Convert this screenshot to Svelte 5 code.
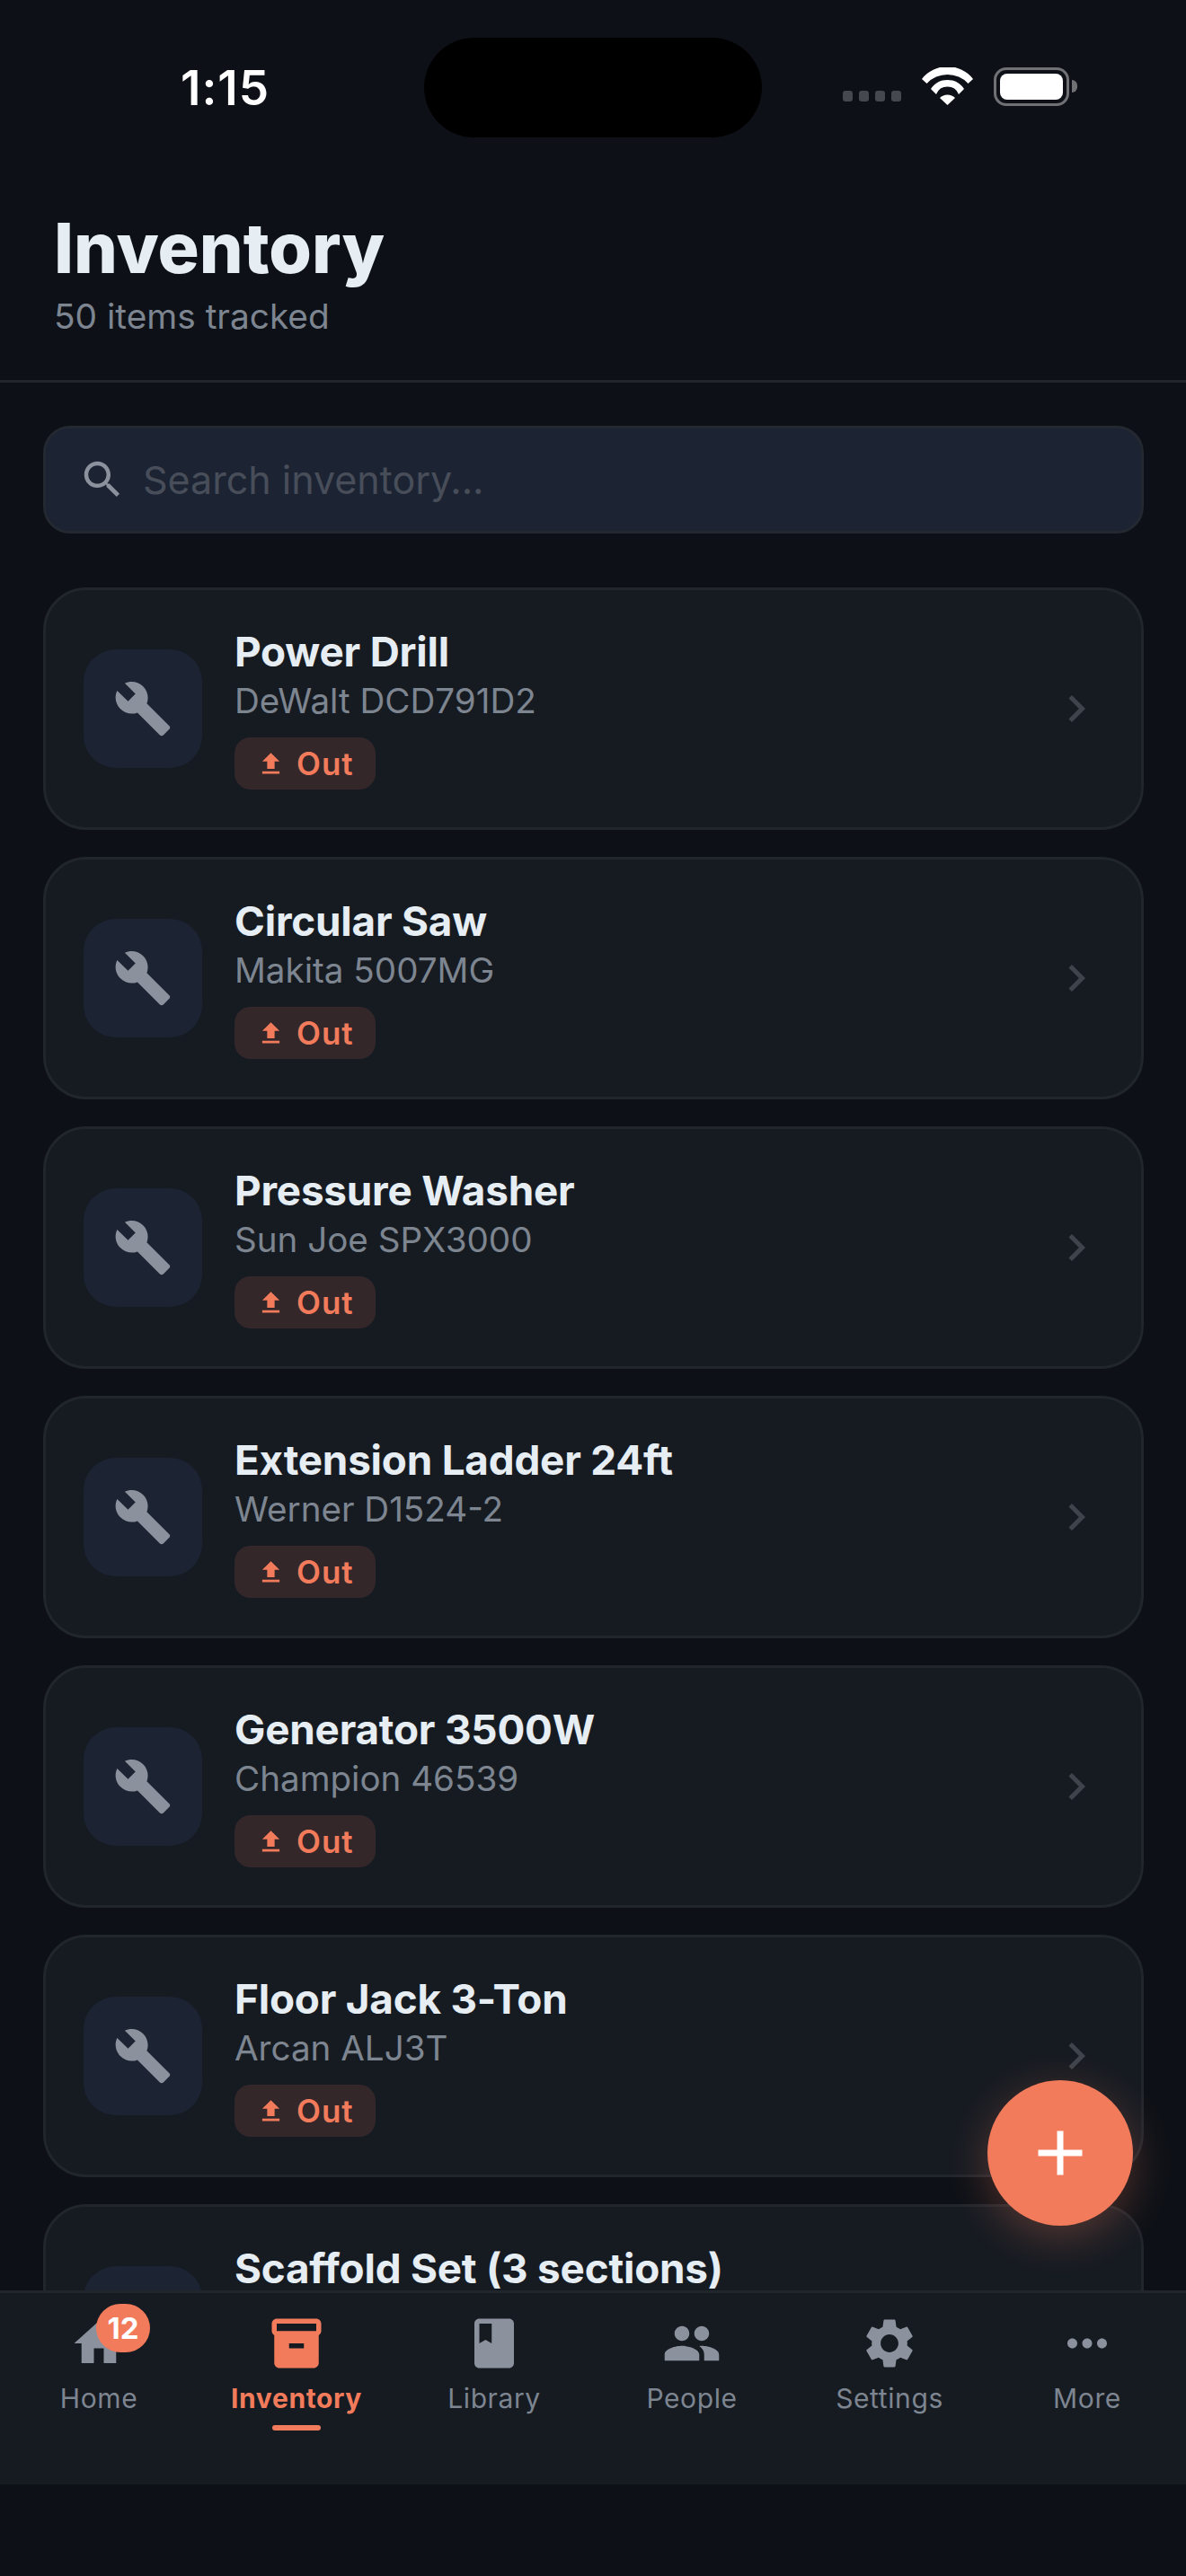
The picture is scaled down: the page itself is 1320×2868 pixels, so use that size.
<script>
  const items = [
    { name: 'Power Drill', model: 'DeWalt DCD791D2', out: true },
    { name: 'Circular Saw', model: 'Makita 5007MG', out: true },
    { name: 'Pressure Washer', model: 'Sun Joe SPX3000', out: true },
    { name: 'Extension Ladder 24ft', model: 'Werner D1524-2', out: true },
    { name: 'Generator 3500W', model: 'Champion 46539', out: true },
    { name: 'Floor Jack 3-Ton', model: 'Arcan ALJ3T', out: true },
    // last row sits behind the tab bar, only its title shows
    { name: 'Scaffold Set (3 sections)' }
  ];

  const tabs = [
    { label: 'Home', badge: '12', d: 'M10 20v-6h4v6h5v-8h3L12 3 2 12h3v8z' },
    { label: 'Inventory', active: true, d: 'M20 2H4c-1 0-2 .9-2 2v3.01c0 .72.43 1.34 1 1.69V20c0 1.1 1.1 2 2 2h14c.9 0 2-.9 2-2V8.7c.57-.35 1-.97 1-1.69V4c0-1.1-1-2-2-2zm-5 12H9v-2h6v2zm5-7H4V4l16-.02V7z' },
    { label: 'Library', d: 'M18 2H6c-1.1 0-2 .9-2 2v16c0 1.1.9 2 2 2h12c1.1 0 2-.9 2-2V4c0-1.1-.9-2-2-2zM6 4h5v8l-2.5-1.5L6 12V4z' },
    { label: 'People', d: 'M16 11c1.66 0 2.99-1.34 2.99-3S17.66 5 16 5c-1.66 0-3 1.34-3 3s1.34 3 3 3zm-8 0c1.66 0 2.99-1.34 2.99-3S9.66 5 8 5C6.34 5 5 6.34 5 8s1.34 3 3 3zm0 2c-2.33 0-7 1.17-7 3.5V19h14v-2.5c0-2.33-4.67-3.5-7-3.5zm8 0c-.29 0-.62.02-.97.05 1.16.84 1.97 1.97 1.97 3.45V19h6v-2.5c0-2.33-4.67-3.5-7-3.5z' },
    { label: 'Settings', d: 'M19.14 12.94c.04-.3.06-.61.06-.94 0-.32-.02-.64-.07-.94l2.03-1.58c.18-.14.23-.41.12-.61l-1.92-3.32c-.12-.22-.37-.29-.59-.22l-2.39.96c-.5-.38-1.03-.7-1.62-.94l-.36-2.54c-.04-.24-.24-.41-.48-.41h-3.84c-.24 0-.43.17-.47.41l-.36 2.54c-.59.24-1.13.57-1.62.94l-2.39-.96c-.22-.08-.47 0-.59.22L2.74 8.87c-.12.21-.08.47.12.61l2.03 1.58c-.05.3-.09.63-.09.94s.02.64.07.94l-2.03 1.58c-.18.14-.23.41-.12.61l1.92 3.32c.12.22.37.29.59.22l2.39-.96c.5.38 1.03.7 1.62.94l.36 2.54c.05.24.24.41.48.41h3.84c.24 0 .44-.17.47-.41l.36-2.54c.59-.24 1.13-.56 1.62-.94l2.39.96c.22.08.47 0 .59-.22l1.92-3.32c.12-.22.07-.47-.12-.61l-2.01-1.58zM12 15.6c-1.98 0-3.6-1.62-3.6-3.6s1.62-3.6 3.6-3.6 3.6 1.62 3.6 3.6-1.62 3.6-3.6 3.6z' },
    { label: 'More', d: 'M6 10c-1.1 0-2 .9-2 2s.9 2 2 2 2-.9 2-2-.9-2-2-2zm12 0c-1.1 0-2 .9-2 2s.9 2 2 2 2-.9 2-2-.9-2-2-2zm-6 0c-1.1 0-2 .9-2 2s.9 2 2 2 2-.9 2-2-.9-2-2-2z' }
  ];
</script>

<div class="screen">
  <div class="status">
    <span class="time">1:15</span>
    <div class="island"></div>
    <div class="status-right">
      <div class="dots"><i></i><i></i><i></i><i></i></div>
      <svg class="wifi" viewBox="0 0 57 42" width="57" height="42" fill="#fff" aria-hidden="true">
        <path d="M0 13A36 36 0 0 1 57 13L51.5 18A31.5 31.5 0 0 0 5.5 18Z"/>
        <path d="M10 24A22 22 0 0 1 47 24L41 30A13.5 13.5 0 0 0 16 30Z"/>
        <path d="M20 34A12 12 0 0 1 37 34L28.5 42Z"/>
      </svg>
      <div class="battery"><div class="cell"></div></div>
      <div class="nub"></div>
    </div>
  </div>

  <header class="head">
    <h1>Inventory</h1>
    <p>50 items tracked</p>
  </header>

  <main class="content">
    <div class="search">
      <svg viewBox="0 0 24 24" width="54" height="54" fill="#8b929d" aria-hidden="true">
        <path d="M15.5 14h-.79l-.28-.27C15.41 12.59 16 11.11 16 9.5 16 5.91 13.09 3 9.5 3S3 5.91 3 9.5 5.91 16 9.5 16c1.61 0 3.09-.59 4.23-1.57l.27.28v.79l5 4.99L20.49 19l-4.99-5zm-6 0C7.01 14 5 11.99 5 9.5S7.01 5 9.5 5 14 7.01 14 9.5 11.99 14 9.5 14z"/>
      </svg>
      <span class="placeholder">Search inventory...</span>
    </div>

    <div class="list">
      {#each items as item}
        <div class="card">
          <div class="thumb">
            <svg viewBox="0 0 24 24" width="66" height="66" fill="#8b929d" aria-hidden="true">
              <path d="M22.7 19l-9.1-9.1c.9-2.3.4-5-1.5-6.9-2-2-5-2.4-7.4-1.3L9 6 6 9 1.6 4.7C.4 7.1.9 10.1 2.9 12.1c1.9 1.9 4.6 2.4 6.9 1.5l9.1 9.1c.4.4 1 .4 1.4 0l2.3-2.3c.5-.4.5-1.1.1-1.4z"/>
            </svg>
          </div>
          <div class="info">
            <span class="name">{item.name}</span>
            {#if item.model}
              <span class="model">{item.model}</span>
            {/if}
            {#if item.out}
              <span class="pill">
                <svg viewBox="0 0 24 24" width="33" height="33" fill="currentColor" aria-hidden="true">
                  <path d="M9 16h6v-6h4l-7-7-7 7h4zm-4 2h14v2H5z"/>
                </svg>
                Out
              </span>
            {/if}
          </div>
          <svg class="chev" viewBox="0 0 24 24" width="60" height="60" fill="#3f444c" aria-hidden="true">
            <path d="M10 6L8.59 7.41 13.17 12l-4.58 4.59L10 18l6-6z"/>
          </svg>
        </div>
      {/each}
    </div>
  </main>

  <nav class="tabs">
    {#each tabs as tab}
      <div class="tab" class:active={tab.active}>
        <div class="tab-icon">
          <svg viewBox="0 0 24 24" width="66" height="66" fill="currentColor" aria-hidden="true">
            <path d={tab.d}/>
          </svg>
          {#if tab.badge}
            <span class="count">{tab.badge}</span>
          {/if}
        </div>
        <span class="tab-label">{tab.label}</span>
        {#if tab.active}
          <span class="underline"></span>
        {/if}
      </div>
    {/each}
  </nav>
  <div class="safe"></div>

  <button class="fab" type="button" aria-label="Add item">
    <svg viewBox="0 0 24 24" width="84" height="84" fill="#fff" aria-hidden="true">
      <path d="M19 13h-6v6h-2v-6H5v-2h6V5h2v6h6v2z"/>
    </svg>
  </button>
</div>

<style>
  :global(body) {
    background: #0d1117;
  }
  .screen {
    position: relative;
    display: flex;
    flex-direction: column;
    width: 1320px;
    height: 2868px;
    overflow: hidden;
    background: #0d1117;
    font-family: Inter, "Noto Sans", sans-serif;
  }
  .status {
    position: relative;
    display: flex;
    flex: none;
    align-items: center;
    justify-content: space-between;
    height: 196px;
    padding: 0 121px 0 201px;
    box-sizing: border-box;
  }
  .time {
    color: #fff;
    font-size: 53px;
    font-weight: 600;
    letter-spacing: 1px;
  }
  .island {
    position: absolute;
    left: 472px;
    top: 42px;
    width: 376px;
    height: 111px;
    border-radius: 56px;
    background: #000;
  }
  .status-right {
    display: flex;
    align-items: center;
    margin-top: -4px;
  }
  .dots {
    display: flex;
    gap: 7px;
    margin: 21px 23px 0 0;
  }
  .dots i {
    width: 11px;
    height: 12px;
    border-radius: 3px;
    background: #45484e;
  }
  .battery {
    box-sizing: border-box;
    width: 84px;
    height: 43px;
    margin-left: 23px;
    padding: 4px;
    border: 3px solid #6f7175;
    border-radius: 14px;
  }
  .cell {
    height: 100%;
    border-radius: 8px;
    background: #fff;
  }
  .nub {
    width: 6px;
    height: 14px;
    margin-left: 3px;
    border-radius: 0 7px 7px 0;
    background: #6f7175;
  }
  .head {
    flex: none;
    padding: 33px 60px 45px;
    border-bottom: 3px solid #21262d;
  }
  .head h1 {
    margin: 0;
    color: #e6edf3;
    font-size: 77px;
    font-weight: 800;
    line-height: 94px;
  }
  .head p {
    margin: 0;
    padding-top: 2px;
    color: #7d8590;
    font-size: 38.8px;
    line-height: 53px;
  }
  .content {
    flex: 1;
    min-height: 0;
    padding: 48px 47px 0 48px;
    overflow: hidden;
  }
  .search {
    display: flex;
    align-items: center;
    gap: 18px;
    box-sizing: border-box;
    height: 120px;
    margin-bottom: 60px;
    padding: 0 36px;
    border: 3px solid #232831;
    border-radius: 30px;
    background: #1c2333;
  }
  .placeholder {
    color: #484e59;
    font-size: 43px;
  }
  .list {
    display: flex;
    flex-direction: column;
    gap: 30px;
  }
  .card {
    display: flex;
    flex: none;
    align-items: center;
    gap: 36px;
    box-sizing: border-box;
    height: 270px;
    padding: 42px;
    border: 3px solid #21262d;
    border-radius: 48px;
    background: #161b22;
  }
  .thumb {
    display: flex;
    flex: none;
    align-items: center;
    justify-content: center;
    width: 132px;
    height: 132px;
    border-radius: 36px;
    background: #1c2333;
  }
  .info {
    display: flex;
    flex: 1;
    flex-direction: column;
    align-items: flex-start;
    align-self: flex-start;
    min-width: 0;
    padding-top: 1px;
  }
  .name {
    color: #e6edf3;
    font-size: 45.8px;
    font-weight: 650;
    line-height: 52px;
    letter-spacing: -0.2px;
  }
  .model {
    padding-top: 4px;
    color: #7d8590;
    font-size: 38.6px;
    line-height: 48px;
  }
  .pill {
    display: inline-flex;
    align-items: center;
    gap: 12px;
    height: 58px;
    margin-top: 17px;
    padding: 0 24px;
    border-radius: 18px;
    background: #33272a;
    color: #f27b5b;
    font-size: 35px;
    font-weight: 600;
    letter-spacing: 1px;
  }
  .chev {
    flex: none;
  }
  .tabs {
    display: flex;
    flex: none;
    box-sizing: border-box;
    height: 216px;
    padding-top: 23px;
    border-top: 3px solid #21262d;
    background: #161b22;
  }
  .tab {
    display: flex;
    flex: 1;
    flex-direction: column;
    align-items: center;
    color: #8b929d;
  }
  .tab.active {
    color: #f27b5b;
  }
  .tab-icon {
    position: relative;
    width: 66px;
    height: 66px;
  }
  .count {
    position: absolute;
    left: 30px;
    top: -11px;
    width: 60px;
    height: 54px;
    border-radius: 27px;
    background: #f27b5b;
    color: #fff;
    font-size: 33px;
    font-weight: 700;
    line-height: 54px;
    text-align: center;
  }
  .tab-label {
    margin-top: 8px;
    color: #7d8590;
    font-size: 30px;
    line-height: 40px;
    letter-spacing: 0.6px;
  }
  .active .tab-label {
    color: #f27b5b;
    font-weight: 700;
  }
  .underline {
    width: 54px;
    height: 6px;
    margin-top: 10px;
    border-radius: 3px;
    background: #f27b5b;
  }
  .safe {
    flex: none;
    height: 102px;
  }
  .fab {
    position: absolute;
    right: 59px;
    bottom: 390px;
    display: flex;
    align-items: center;
    justify-content: center;
    width: 162px;
    height: 162px;
    padding: 0;
    border: none;
    border-radius: 50%;
    background: #f27b5b;
    box-shadow: 0 12px 48px rgba(242, 123, 91, 0.3);
  }
</style>
